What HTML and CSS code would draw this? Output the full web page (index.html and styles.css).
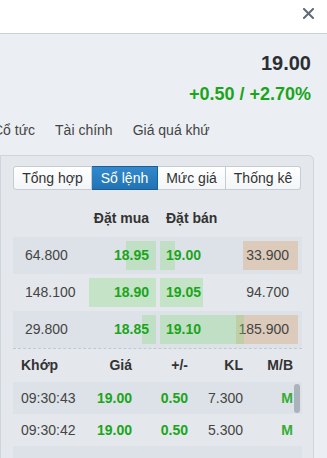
FILE: index.html
```html
<!DOCTYPE html>
<html lang="vi">
<head>
  <meta charset="UTF-8">
  <meta name="viewport" content="width=device-width, initial-scale=1">
  <title>Sổ lệnh</title>
  <link rel="stylesheet" href="styles.css">
</head>
<body>
  <header class="topbar">
    <button class="close" aria-label="Đóng">
      <svg width="11" height="11" viewBox="0 0 11 11"><path d="M1 1L10 10M10 1L1 10" stroke="#5d6b79" stroke-width="2" stroke-linecap="square"/></svg>
    </button>
  </header>

  <main class="content">
    <div class="quote">
      <div class="price">19.00</div>
      <div class="change">+0.50 / +2.70%</div>
    </div>

    <nav class="subnav">
      <a href="#">Cổ tức</a>
      <a href="#">Tài chính</a>
      <a href="#">Giá quá khứ</a>
    </nav>

    <section class="panel">
      <div class="seg">
        <button class="w1">Tổng hợp</button>
        <button class="w2 active">Sổ lệnh</button>
        <button class="w3">Mức giá</button>
        <button class="w4">Thống kê</button>
      </div>

      <!-- order book -->
      <div class="book">
        <div class="book-head">
          <span class="c-bvol"></span>
          <span class="c-bprice">Đặt mua</span>
          <span class="c-aprice">Đặt bán</span>
          <span class="c-avol"></span>
        </div>
        <div class="book-row">
          <span class="c-bvol">64.800</span>
          <span class="c-bprice"><i class="bar" style="width:30px"></i><b>18.95</b></span>
          <span class="c-avol"><i class="bar tan" style="width:55px"></i><em>33.900</em></span>
          <span class="c-aprice"><i class="bar" style="width:15px"></i><b>19.00</b></span>
        </div>
        <div class="book-row">
          <span class="c-bvol">148.100</span>
          <span class="c-bprice"><i class="bar" style="width:67px"></i><b>18.90</b></span>
          <span class="c-avol"><em>94.700</em></span>
          <span class="c-aprice"><i class="bar" style="width:43px"></i><b>19.05</b></span>
        </div>
        <div class="book-row">
          <span class="c-bvol">29.800</span>
          <span class="c-bprice"><i class="bar" style="width:14px"></i><b>18.85</b></span>
          <span class="c-avol"><i class="bar tan" style="width:62px"></i><em>185.900</em></span>
          <span class="c-aprice"><i class="bar" style="width:84px"></i><b>19.10</b></span>
        </div>
      </div>

      <!-- matched trades -->
      <div class="trades">
        <div class="trade-head">
          <span>Khớp</span><span>Giá</span><span>+/-</span><span>KL</span><span>M/B</span>
        </div>
        <div class="trade-list">
          <div class="trade-row">
            <span>09:30:43</span><span class="up">19.00</span><span class="up">0.50</span><span>7.300</span><span class="side">M</span>
          </div>
          <div class="trade-row">
            <span>09:30:42</span><span class="up">19.00</span><span class="up">0.50</span><span>5.300</span><span class="side">M</span>
          </div>
          <div class="trade-row">
            <span></span><span></span><span></span><span></span><span></span>
          </div>
          <div class="thumb"></div>
        </div>
      </div>
    </section>
  </main>
</body>
</html>
```

FILE: styles.css
```css
body {
  margin: 0;
  font-family: "Liberation Sans", Arial, sans-serif;
  font-size: 14px;
  background: #ebeff3;
  color: #444;
  overflow: hidden;
}
.topbar {
  height: 33px;
  background: #fff;
  border-bottom: 1px solid #c9d0d7;
  display: flex;
  justify-content: flex-end;
  align-items: flex-start;
}
.close {
  margin: 8px 13px 0 0;
  padding: 0;
  border: none;
  background: none;
  width: 11px;
  height: 11px;
  line-height: 0;
  cursor: pointer;
}
.quote {
  padding: 17px 16px 0 0;
  text-align: right;
}
.price {
  font-size: 20px;
  line-height: 24px;
  font-weight: bold;
  color: #2b2f33;
}
.change {
  margin-top: 8px;
  font-size: 18px;
  line-height: 22px;
  font-weight: bold;
  color: #1aa51a;
}
.subnav {
  display: flex;
  gap: 20px;
  margin: 15px 0 0 -7px;
  line-height: 20px;
}
.subnav a {
  color: #444;
  text-decoration: none;
  white-space: nowrap;
}
.panel {
  margin-top: 15px;
  width: 289px;
  padding: 10px 11px 40px 12px;
  background: #e4e8ec;
  border: 1px solid #cfd5dc;
  border-radius: 0 5px 0 0;
}
.seg {
  display: flex;
  height: 24px;
}
.seg button {
  box-sizing: border-box;
  flex: none;
  font: inherit;
  color: #333;
  padding: 0;
  height: 24px;
  white-space: nowrap;
  border: 1px solid #c5ccd3;
  border-left: none;
  background: linear-gradient(#fff, #f3f5f7);
  cursor: pointer;
}
.seg .w1 { width: 79px; }
.seg .w2 { width: 66px; }
.seg .w3 { width: 68px; }
.seg .w4 { width: 75px; }
.seg button:first-child {
  border-left: 1px solid #c5ccd3;
  border-radius: 3px 0 0 3px;
}
.seg button:last-child {
  border-radius: 0 3px 3px 0;
}
.seg button.active {
  background: linear-gradient(#3389cc, #2173b4);
  border-color: #1b5f96;
  color: #fff;
}

/* order book */
.book-head, .book-row {
  display: flex;
  padding-right: 4px;
}
.book-head {
  margin: 18px 0 9px;
  line-height: 20px;
  font-weight: bold;
  color: #333;
}
.book-row {
  padding-top: 4px;
  padding-bottom: 4px;
  line-height: 29px;
}
.book-row:nth-child(even) {
  background: #dde2e8;
}
.book-row > span {
  position: relative;
  height: 29px;
}
.c-bvol { width: 60px; padding-left: 12px; }
.c-bprice { width: 64px; padding-right: 7px; text-align: right; }
.c-aprice { width: 70px; padding-left: 6px; margin-left: 4px; order: 3; }
.c-avol { width: 53px; padding-right: 9px; text-align: right; order: 4; }
.book-head .c-aprice { order: 0; }
.book-row b {
  position: relative;
  color: #1aa51a;
}
.book-row em {
  position: relative;
  font-style: normal;
}
.bar {
  position: absolute;
  top: 0;
  bottom: 0;
  background: rgba(135, 217, 121, 0.32);
}
.c-bprice .bar { right: 0; }
.c-aprice .bar { left: 0; z-index: 1; }
.c-aprice b { z-index: 2; }
.bar.tan {
  right: 0;
  background: #dccbbb;
}

/* matched trades */
.trades {
  border-top: 1px dashed #c2c8cf;
}
.trade-head, .trade-row {
  display: grid;
  grid-template-columns: 59px 52px 56px 55px 50px;
  padding: 0 9px 0 8px;
}
.trade-head span, .trade-row span { text-align: right; }
.trade-head span:first-child, .trade-row span:first-child { text-align: left; }
.trade-head {
  height: 33px;
  line-height: 33px;
  font-weight: bold;
  color: #333;
}
.trade-list {
  position: relative;
}
.trade-row {
  height: 32px;
  line-height: 32px;
}
.trade-row:nth-child(odd) {
  background: #dde2e8;
}
.up {
  font-weight: bold;
  color: #1aa51a;
}
.side {
  font-weight: bold;
  color: #33ad33;
}
.thumb {
  position: absolute;
  top: 2px;
  right: 2px;
  width: 6px;
  height: 29px;
  border-radius: 3px;
  background: #aab3bc;
}
```
